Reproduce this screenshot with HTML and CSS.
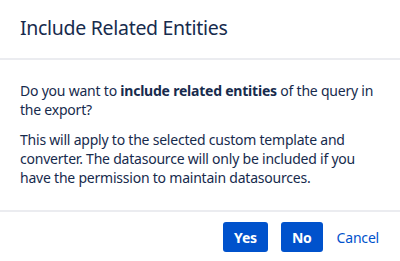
FILE: index.html
```html
<!DOCTYPE html>
<html>
<head>
<meta charset="utf-8">
<link rel="stylesheet" href="styles.css">
</head>
<body>
<div class="dialog">
  <div class="header"><h1 class="title">Include Related Entities</h1></div>
  <div class="content">
    <p class="para">Do you want to <b>include related entities</b> of the query in the export?</p>
    <p class="para">This will apply to the selected custom template and converter. The datasource will only be included if you have the permission to maintain datasources.</p>
  </div>
  <div class="footer">
    <button class="btn primary">Yes</button>
    <button class="btn primary">No</button>
    <button class="link">Cancel</button>
  </div>
</div>
</body>
</html>
```
FILE: styles.css
```css
html, body {
  margin: 0;
  padding: 0;
  background: #fff;
}
body {
  font-family: "Noto Sans", "Open Sans", sans-serif;
  color: #172b4d;
  width: 400px;
  height: 261px;
  overflow: hidden;
}
.dialog {
  display: flex;
  flex-direction: column;
}
.header {
  padding: 16px 20px 18px;
  border-bottom: 2px solid #ebecf0;
}
.title {
  margin: 0;
  font-size: 19.5px;
  line-height: 24px;
  font-weight: 400;
  letter-spacing: -0.3px;
}
.content {
  padding: 22px 20px 23px;
  border-bottom: 2px solid #ebecf0;
}
.para {
  margin: 0;
  font-size: 14px;
  line-height: 18.67px;
  letter-spacing: -0.22px;
}
.para + .para {
  margin-top: 12px;
}
.para b {
  font-weight: 700;
}
.footer {
  display: flex;
  justify-content: flex-end;
  align-items: center;
  gap: 13px;
  padding: 10px 21px 8px 20px;
}
.btn {
  font-family: inherit;
  height: 30px;
  padding: 0 11px;
  border: none;
  border-radius: 3px;
  font-size: 14px;
  font-weight: 700;
  letter-spacing: -0.2px;
}
.primary {
  background: #0052cc;
  color: #fff;
}
.link {
  font-family: inherit;
  background: none;
  border: none;
  padding: 0;
  margin-left: 1px;
  font-size: 14px;
  letter-spacing: -0.2px;
  color: #0052cc;
  height: 30px;
}
```
